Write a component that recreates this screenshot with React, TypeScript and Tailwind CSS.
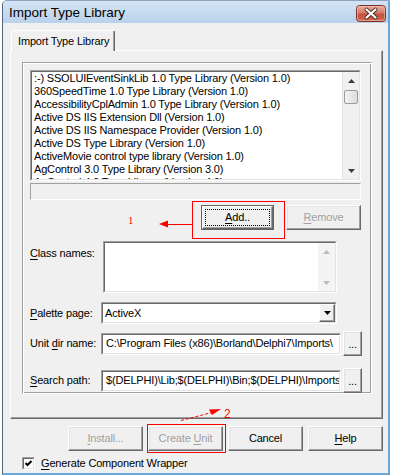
import type { ReactNode } from "react";

const LIBS = [
  ":-) SSOLUIEventSinkLib 1.0 Type Library (Version 1.0)",
  "360SpeedTime 1.0 Type Library (Version 1.0)",
  "AccessibilityCplAdmin 1.0 Type Library (Version 1.0)",
  "Active DS IIS Extension Dll (Version 1.0)",
  "Active DS IIS Namespace Provider (Version 1.0)",
  "Active DS Type Library (Version 1.0)",
  "ActiveMovie control type library (Version 1.0)",
  "AgControl 3.0 Type Library (Version 3.0)",
  "AgControl 4.0 Type Library (Version 4.0)",
];

const U = ({ c }: { c: string }) => <span className="underline underline-offset-[2px]">{c}</span>;

function Btn({ children, className = "", disabled = false }: { children: ReactNode; className?: string; disabled?: boolean }) {
  return (
    <div
      className={`h-[25px] flex items-center justify-center border border-t-white border-l-white border-r-[#696969] border-b-[#696969] shadow-[inset_-1px_-1px_0_#a0a0a0,inset_1px_1px_0_#e3e3e3] ${
        disabled ? "text-[#a0a0a0]" : "text-black"
      } ${className}`}
    >
      {children}
    </div>
  );
}

function Tri({ up = false, color }: { up?: boolean; color: string }) {
  return (
    <svg width="7" height="4" viewBox="0 0 7 4">
      <polygon points={up ? "3.5,0 7,4 0,4" : "0,0 7,0 3.5,4"} fill={color} />
    </svg>
  );
}

function Sunken({ className = "", inner = "", children }: { className?: string; inner?: string; children?: ReactNode }) {
  return (
    <div className={`border border-t-[#a0a0a0] border-l-[#a0a0a0] border-r-white border-b-white ${className}`}>
      <div className={`h-full border border-t-[#696969] border-l-[#696969] border-r-[#e3e3e3] border-b-[#e3e3e3] ${inner}`}>
        {children}
      </div>
    </div>
  );
}

function CloseBox() {
  return (
    <svg width="30" height="17" viewBox="0 0 30 17">
      <defs>
        <linearGradient id="cb" x1="0" y1="0" x2="0" y2="1">
          <stop offset="0" stopColor="#eab0a3" />
          <stop offset="0.45" stopColor="#d77a68" />
          <stop offset="0.55" stopColor="#c4523f" />
          <stop offset="1" stopColor="#cf6a4f" />
        </linearGradient>
      </defs>
      <rect x="0.5" y="0.5" width="29" height="16" rx="3" fill="url(#cb)" stroke="#7d3127" />
      <rect x="1.5" y="1.5" width="27" height="14" rx="2" fill="none" stroke="#f3c3b6" strokeOpacity="0.6" />
      <path d="M10.5 4.5 L19.5 12.5 M19.5 4.5 L10.5 12.5" stroke="#4b2a26" strokeWidth="4" strokeLinecap="round" />
      <path d="M10.5 4.5 L19.5 12.5 M19.5 4.5 L10.5 12.5" stroke="#ffffff" strokeWidth="2.2" strokeLinecap="round" />
    </svg>
  );
}

function ListScroll() {
  return (
    <div className="w-[17px] h-full flex flex-col bg-[#f0f0f0] border-l border-[#e6e6e6]">
      <div className="h-[17px] flex items-center justify-center">
        <Tri up color="#3c3c3c" />
      </div>
      <div className="mt-px mx-px h-[14px] rounded-[2px] border border-[#9b9b9b] bg-gradient-to-r from-[#f4f4f4] to-[#dcdcdc]" />
      <div className="flex-1" />
      <div className="h-[17px] flex items-center justify-center">
        <Tri color="#3c3c3c" />
      </div>
    </div>
  );
}

function Dots() {
  return (
    <Btn className="ml-[2px] w-[19px] h-[22px] items-end pb-[5px]">
      <span className="leading-none">...</span>
    </Btn>
  );
}

function Row({ label, children, className = "" }: { label: ReactNode; children: ReactNode; className?: string }) {
  return (
    <div className={`flex items-center ${className}`}>
      <div className="w-[71px] whitespace-nowrap">{label}</div>
      {children}
    </div>
  );
}

export default function App() {
  return (
    <div className="relative w-[393px] h-[476px] bg-white overflow-hidden font-['Liberation_Sans',Arial,sans-serif] text-[11px] tracking-[-0.17px] text-black">
      <div className="ml-[2px] w-[388px] h-[475px] flex flex-col border-l border-t border-l-[#52657a] border-t-[#8ea4bd] border-r-2 border-r-[#6aa8da] border-b-2 border-b-[#6aa8da] rounded-tl-[5px] overflow-hidden bg-[#f0f0f0]">
        {/* title bar */}
        <div className="h-[22px] flex items-center pl-[6px] pr-[2px] bg-gradient-to-b from-[#d5e4f5] to-[#b9d1eb]">
          <span className="text-[13.5px] tracking-normal leading-none pt-px">Import Type Library</span>
          <div className="ml-auto mt-[2px]">
            <CloseBox />
          </div>
        </div>

        {/* client */}
        <div className="flex-1 flex flex-col pt-[7px]">
          <div className="relative z-10 ml-[8px] -mb-px w-[104px] h-[21px] flex items-center pl-[6px] bg-[#f0f0f0] border-t border-l border-t-white border-l-white border-r border-r-[#696969] shadow-[inset_-1px_0_0_#a0a0a0] rounded-t-[2px]">
            Import Type Library
          </div>
          <div className="ml-[7px] w-[373px] h-[369px] border border-t-white border-l-white border-r-[#696969] border-b-[#696969] shadow-[inset_-1px_-1px_0_#a0a0a0]">
            {/* group */}
            <div className="mt-[11px] ml-[11px] w-[350px] h-[332px] border border-t-[#a0a0a0] border-l-[#a0a0a0] border-r-white border-b-white shadow-[inset_1px_1px_0_#fff,inset_-1px_-1px_0_#a0a0a0] pl-[7px] pt-[7px] flex flex-col">
              <Sunken className="w-[331px] h-[111px]" inner="bg-white flex overflow-hidden">
                <div className="flex-1 overflow-hidden">
                  {LIBS.map((l) => (
                    <div key={l} className="h-[13px] leading-[13px] pl-[2px] whitespace-nowrap overflow-hidden">
                      {l}
                    </div>
                  ))}
                </div>
                <ListScroll />
              </Sunken>

              <div className="mt-[2px] w-[331px] h-[18px] border border-t-[#a0a0a0] border-l-[#a0a0a0] border-r-white border-b-white" />

              <div className="mt-[5px] flex ml-[171px] gap-[12px]">
                <div className="w-[73px] h-[25px] border border-[#646464] flex">
                  <div className="flex-1 flex p-[2px] border border-t-white border-l-white border-r-[#696969] border-b-[#696969] shadow-[inset_-1px_-1px_0_#a0a0a0]">
                    <div className="flex-1 flex items-center justify-center border border-dotted border-black">
                      <span>
                        <U c="A" />
                        dd..
                      </span>
                    </div>
                  </div>
                </div>
                <Btn disabled className="w-[75px]">
                  <span>
                    <U c="R" />
                    emove
                  </span>
                </Btn>
              </div>

              <div className="mt-[11px] flex items-start">
                <div className="w-[73px] pt-[4px]">
                  <U c="C" />
                  lass names:
                </div>
                <Sunken className="w-[234px] h-[52px]" inner="bg-white flex justify-end">
                  <div className="w-[17px] h-full flex flex-col justify-between bg-[#f4f4f4]">
                    <div className="h-[17px] flex items-center justify-center">
                      <Tri up color="#bcbcbc" />
                    </div>
                    <div className="h-[17px] flex items-center justify-center">
                      <Tri color="#bcbcbc" />
                    </div>
                  </div>
                </Sunken>
              </div>

              <Row
                className="mt-[9px]"
                label={
                  <>
                    <U c="P" />
                    alette page:
                  </>
                }
              >
                <Sunken className="w-[236px] h-[22px]" inner="bg-white flex items-center">
                  <span className="flex-1 pl-[2px]">ActiveX</span>
                  <div className="w-[16px] h-full flex items-center justify-center bg-[#f0f0f0] border border-t-white border-l-white border-r-[#696969] border-b-[#696969] shadow-[inset_-1px_-1px_0_#a0a0a0]">
                    <Tri color="#000" />
                  </div>
                </Sunken>
              </Row>

              <Row
                className="mt-[7px]"
                label={
                  <>
                    Unit <U c="d" />
                    ir name:
                  </>
                }
              >
                <Sunken className="w-[240px] h-[22px]" inner="bg-white flex items-center overflow-hidden">
                  <span className="flex-1 min-w-0 overflow-hidden pl-[3px] whitespace-nowrap">C:\Program Files (x86)\Borland\Delphi7\Imports\</span>
                </Sunken>
                <Dots />
              </Row>

              <Row
                className="mt-[12px]"
                label={
                  <>
                    <U c="S" />
                    earch path:
                  </>
                }
              >
                <Sunken className="w-[240px] h-[22px]" inner="bg-white flex items-center overflow-hidden">
                  <span className="flex-1 min-w-0 overflow-hidden pl-[3px] whitespace-nowrap">$(DELPHI)\Lib;$(DELPHI)\Bin;$(DELPHI)\Imports;$(DELPHI)\Projects\Bpl</span>
                </Sunken>
                <Dots />
              </Row>
            </div>
          </div>

          {/* bottom buttons */}
          <div className="mt-[7px] ml-[65px] flex gap-[5px]">
            <Btn disabled className="w-[75px]">
              <span>
                <U c="I" />
                nstall...
              </span>
            </Btn>
            <Btn disabled className="w-[75px]">
              <span>
                Create <U c="U" />
                nit
              </span>
            </Btn>
            <Btn className="w-[75px]">Cancel</Btn>
            <Btn className="w-[75px]">
              <span>
                <U c="H" />
                elp
              </span>
            </Btn>
          </div>

          <div className="mt-[4px] ml-[19px] flex items-center gap-[6px]">
            <Sunken className="w-[13px] h-[13px]" inner="bg-white flex items-center justify-center">
              <svg width="9" height="9" viewBox="0 0 9 9">
                <polyline points="1.5,4 3.5,6 7.5,2" stroke="#000" strokeWidth="2" fill="none" />
              </svg>
            </Sunken>
            <span>
              <U c="G" />
              enerate Component Wrapper
            </span>
          </div>
        </div>
      </div>

      {/* red annotations */}
      <svg className="absolute inset-0 pointer-events-none" width="393" height="476" viewBox="0 0 393 476">
        <rect x="192.5" y="201.5" width="92" height="37" fill="none" stroke="#ff0000" />
        <line x1="192" y1="224.5" x2="167" y2="224.5" stroke="#ff0000" />
        <polygon points="159,224 168,220.5 168,227.5" fill="#ff0000" />
        <text x="128" y="224" fontFamily="'Liberation Serif', serif" fontSize="11" fill="#ff0000">
          1
        </text>
        <rect x="147.5" y="424.5" width="78" height="28" fill="none" stroke="#ff0000" />
        <line x1="181" y1="420.5" x2="212" y2="412.5" stroke="#ff0000" strokeDasharray="3 2" />
        <polygon points="221,409 209,409.5 212,415" fill="#ff0000" />
        <text x="224" y="418" fontFamily="'Liberation Sans', Arial, sans-serif" fontSize="12" fill="#ff0000">
          2
        </text>
      </svg>
    </div>
  );
}
